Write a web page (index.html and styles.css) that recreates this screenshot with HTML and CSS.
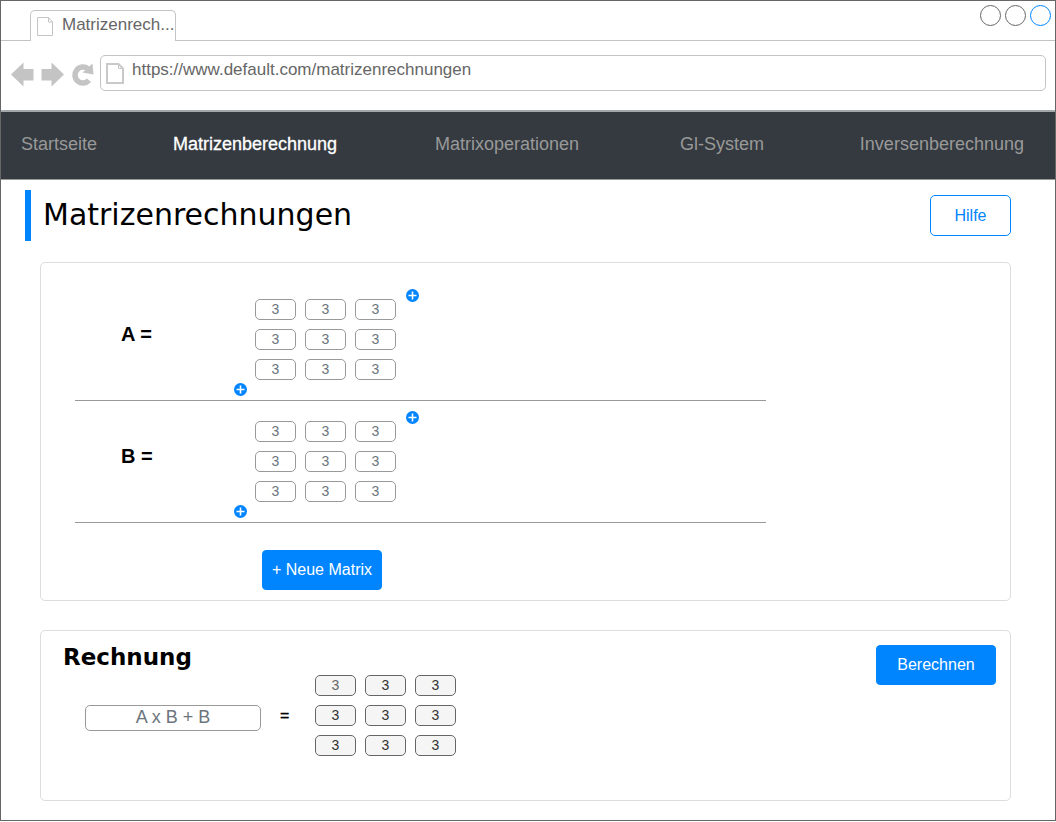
FILE: index.html
```html
<!DOCTYPE html>
<html lang="de">
<head>
<meta charset="utf-8">
<meta name="viewport" content="width=device-width, initial-scale=1">
<title>Matrizenrechnungen</title>
<link rel="stylesheet" href="styles.css">
</head>
<body>
<div class="window">
  <div class="tab-strip">
    <div class="tab">
      <svg class="tab-icon" width="16" height="19" viewBox="0 0 16 19" fill="none" stroke="#c4c4c4"><path d="M.5 .5H11.500L15.500 5V18.500H.5ZM11.500 .5V5H15.500"/></svg>
      <span class="tab-title">Matrizenrech...</span>
    </div>
    <div class="window-controls">
      <button class="window-dot" type="button" aria-label="Minimieren"></button>
      <button class="window-dot" type="button" aria-label="Maximieren"></button>
      <button class="window-dot window-dot-active" type="button" aria-label="Schließen"></button>
    </div>
  </div>

  <div class="toolbar">
    <button class="tool" type="button" aria-label="Zurück"><svg width="23" height="26" viewBox="0 0 23 26" fill="#c4c4c4"><path d="M0 12.500L12.500 .5V7H22.500V18.500H12.500V24.500Z"/></svg></button>
    <button class="tool" type="button" aria-label="Vorwärts"><svg width="23" height="26" viewBox="0 0 23 26" fill="#c4c4c4"><path d="M23 12.500L10.500 .5V7H.5V18.500H10.500V24.500Z"/></svg></button>
    <button class="tool" type="button" aria-label="Neu laden"><svg width="22" height="26" viewBox="0 0 22 26" overflow="visible"><path d="M17 6.800A8 8 0 1 0 18 18.300" fill="none" stroke="#c4c4c4" stroke-width="5.500"/><path d="M21.500 1.500L22.500 12.500L11.500 10.500Z" fill="#c4c4c4"/></svg></button>
    <div class="address">
      <svg width="18" height="21" viewBox="0 0 18 21" fill="none" stroke="#c9c9c9" stroke-width="2"><path d="M1 1H12.500L17 5.500V20H1Z"/><path d="M12.500 1V5.500H17" stroke-width="1"/></svg>
      <input class="address-input" type="text" aria-label="Adresse" value="https://www.default.com/matrizenrechnungen">
    </div>
  </div>

  <nav class="nav">
    <a class="nav-link" href="#start">Startseite</a>
    <a class="nav-link nav-link-active" href="#matrizen" aria-current="page">Matrizenberechnung</a>
    <a class="nav-link" href="#operationen">Matrixoperationen</a>
    <a class="nav-link" href="#system">Gl-System</a>
    <a class="nav-link" href="#inverse">Inversenberechnung</a>
  </nav>

  <main class="page">
    <header class="page-head">
      <h1 class="page-title">Matrizenrechnungen</h1>
      <button class="btn btn-outline" type="button">Hilfe</button>
    </header>

    <section class="card matrices" aria-label="Matrizen">
      <div class="matrix-row">
        <span class="matrix-name">A =</span>
        <button class="add add-row" type="button" aria-label="Zeile zu A hinzufügen"><svg width="13" height="13" viewBox="0 0 13 13"><circle cx="6.500" cy="6.500" r="6.500" fill="#0085ff"/><path d="M6.500 2.500V10.500M2.500 6.500H10.500" stroke="#fff" stroke-width="1.600"/></svg></button>
        <div class="matrix matrix-edit">
          <input class="cell" aria-label="A 1,1" value="3"><input class="cell" aria-label="A 1,2" value="3"><input class="cell" aria-label="A 1,3" value="3">
          <input class="cell" aria-label="A 2,1" value="3"><input class="cell" aria-label="A 2,2" value="3"><input class="cell" aria-label="A 2,3" value="3">
          <input class="cell" aria-label="A 3,1" value="3"><input class="cell" aria-label="A 3,2" value="3"><input class="cell" aria-label="A 3,3" value="3">
        </div>
        <button class="add add-column" type="button" aria-label="Spalte zu A hinzufügen"><svg width="13" height="13" viewBox="0 0 13 13"><circle cx="6.500" cy="6.500" r="6.500" fill="#0085ff"/><path d="M6.500 2.500V10.500M2.500 6.500H10.500" stroke="#fff" stroke-width="1.600"/></svg></button>
      </div>
      <div class="matrix-row">
        <span class="matrix-name">B =</span>
        <button class="add add-row" type="button" aria-label="Zeile zu B hinzufügen"><svg width="13" height="13" viewBox="0 0 13 13"><circle cx="6.500" cy="6.500" r="6.500" fill="#0085ff"/><path d="M6.500 2.500V10.500M2.500 6.500H10.500" stroke="#fff" stroke-width="1.600"/></svg></button>
        <div class="matrix matrix-edit">
          <input class="cell" aria-label="B 1,1" value="3"><input class="cell" aria-label="B 1,2" value="3"><input class="cell" aria-label="B 1,3" value="3">
          <input class="cell" aria-label="B 2,1" value="3"><input class="cell" aria-label="B 2,2" value="3"><input class="cell" aria-label="B 2,3" value="3">
          <input class="cell" aria-label="B 3,1" value="3"><input class="cell" aria-label="B 3,2" value="3"><input class="cell" aria-label="B 3,3" value="3">
        </div>
        <button class="add add-column" type="button" aria-label="Spalte zu B hinzufügen"><svg width="13" height="13" viewBox="0 0 13 13"><circle cx="6.500" cy="6.500" r="6.500" fill="#0085ff"/><path d="M6.500 2.500V10.500M2.500 6.500H10.500" stroke="#fff" stroke-width="1.600"/></svg></button>
      </div>
      <button class="btn btn-primary new-matrix" type="button">+ Neue Matrix</button>
    </section>

    <section class="card calc">
      <div class="calc-main">
        <h2 class="calc-title">Rechnung</h2>
        <div class="calc-row">
          <input class="formula" type="text" aria-label="Formel" value="A x B + B">
          <span class="equals">=</span>
          <div class="matrix">
            <input class="cell cell-result cell-soft" aria-label="Ergebnis 1,1" value="3" readonly><input class="cell cell-result" aria-label="Ergebnis 1,2" value="3" readonly><input class="cell cell-result" aria-label="Ergebnis 1,3" value="3" readonly>
            <input class="cell cell-result" aria-label="Ergebnis 2,1" value="3" readonly><input class="cell cell-result" aria-label="Ergebnis 2,2" value="3" readonly><input class="cell cell-result" aria-label="Ergebnis 2,3" value="3" readonly>
            <input class="cell cell-result" aria-label="Ergebnis 3,1" value="3" readonly><input class="cell cell-result" aria-label="Ergebnis 3,2" value="3" readonly><input class="cell cell-result" aria-label="Ergebnis 3,3" value="3" readonly>
          </div>
        </div>
      </div>
      <button class="btn btn-primary" type="button">Berechnen</button>
    </section>
  </main>
</div>
</body>
</html>
```
FILE: styles.css
```css
* {
  box-sizing: border-box;
}

body {
  margin: 0;
  background: #fff;
  color: #000;
  font-family: "Liberation Sans", Arial, sans-serif;
  font-size: 16px;
}

button,
input {
  margin: 0;
  padding: 0;
  font-family: inherit;
}

svg {
  display: block;
}

.window {
  border: 1px solid #666;
}

/* Browser chrome */
.tab-strip {
  display: flex;
  justify-content: space-between;
  align-items: flex-start;
  height: 40px;
  padding: 4px 4px 0 29px;
  border-bottom: 1px solid #c4c4c4;
}

.tab {
  display: flex;
  gap: 9px;
  width: 146px;
  height: 31px;
  margin-top: 5px;
  padding: 5px 0 0 6px;
  border: 1px solid #c4c4c4;
  border-bottom: 0;
  border-radius: 5px 5px 0 0;
  background: #fff;
}

.tab-icon {
  flex: none;
  margin-top: 1px;
}

.tab-title {
  color: #666;
  font-size: 17px;
  line-height: 18px;
  white-space: nowrap;
}

.window-controls {
  display: flex;
  gap: 4px;
}

.window-dot {
  width: 21px;
  height: 21px;
  border: 1px solid #666;
  border-radius: 50%;
  background: #fff;
}

.window-dot-active {
  border-color: #0085ff;
}

.toolbar {
  display: flex;
  align-items: center;
  gap: 7px;
  padding: 14px 9px 19px 10px;
}

.tool {
  padding-top: 4px;
  border: 0;
  background: none;
}

.address {
  display: flex;
  flex: 1;
  align-items: center;
  gap: 8px;
  height: 36px;
  padding-left: 5px;
  border: 1px solid #c4c4c4;
  border-radius: 5px;
}

.address-input {
  flex: 1;
  height: 34px;
  padding-bottom: 6px;
  border: 0;
  background: none;
  color: #666;
  font-size: 17px;
}

/* Navigation */
.nav {
  display: grid;
  grid-template-columns: 152fr 262fr 245fr 180fr auto;
  align-items: center;
  height: 70px;
  padding: 0 31px 4px 20px;
  border-top: 2px solid #a5a8aa;
  border-bottom: 1px solid #999;
  background: #343a40;
}

.nav-link {
  color: #999;
  font-size: 18px;
  line-height: 20px;
  text-decoration: none;
}

.nav-link-active {
  color: #fff;
  -webkit-text-stroke: 0.3px #fff;
}

/* Page */
.page {
  padding: 10px 44px 19px 39px;
}

.page-head {
  display: flex;
  justify-content: space-between;
  align-items: center;
  margin: 0 0 21px -15px;
}

.page-title {
  margin: 0;
  padding: 0 12px 2px;
  border-left: 6px solid #0085ff;
  font-family: "DejaVu Sans", Verdana, sans-serif;
  font-size: 30px;
  font-weight: 400;
  line-height: 49px;
}

.btn {
  width: 120px;
  height: 40px;
  border: 1px solid #0085ff;
  border-radius: 4px;
  font-size: 16px;
}

.btn-outline {
  width: 81px;
  height: 41px;
  border-radius: 5px;
  background: #fff;
  color: #0085ff;
}

.btn-primary {
  background: #0085ff;
  color: #fff;
}

.card {
  border: 1px solid #ddd;
  border-radius: 5px;
}

/* Matrix input */
.matrices {
  padding: 16px 244px 10px 34px;
}

.matrix-row {
  display: flex;
  align-items: center;
  padding: 10px 0 4px 46px;
  border-bottom: 1px solid #999;
}

.matrix-name {
  width: 113px;
  padding-bottom: 16px;
  font-size: 20px;
  font-weight: 700;
}

.matrix {
  display: grid;
  grid-template-columns: repeat(3, 41px);
  gap: 9px;
}

.matrix-edit {
  margin: 10px 10px 16px 8px;
}

.add {
  border: 0;
  background: none;
}

.add-row {
  align-self: flex-end;
}

.add-column {
  align-self: flex-start;
}

.cell {
  width: 100%;
  height: 21px;
  padding-bottom: 2px;
  border: 1px solid #999;
  border-radius: 5px;
  background: #fff;
  color: #6c757d;
  font-size: 14px;
  text-align: center;
}

.cell-result {
  border-color: #666;
  background: #f5f5f5;
  color: #333;
}

.cell-soft {
  color: #666;
}

.new-matrix {
  display: block;
  margin: 27px 0 0 187px;
}

/* Calculation */
.calc {
  display: flex;
  justify-content: space-between;
  align-items: flex-start;
  margin-top: 29px;
  padding: 14px 14px 44px 22px;
}

.calc-title {
  margin: 0;
  font-family: "DejaVu Sans", Verdana, sans-serif;
  font-size: 23px;
  font-weight: 700;
  line-height: 24px;
}

.calc-row {
  display: flex;
  align-items: center;
  margin-top: 6px;
  padding-left: 22px;
}

.formula {
  width: 176px;
  height: 26px;
  margin-top: 4px;
  border: 1px solid #999;
  border-radius: 5px;
  color: #6c757d;
  font-size: 18px;
  text-align: center;
}

.equals {
  width: 54px;
  padding-left: 19px;
  -webkit-text-stroke: 0.3px #000;
}
```
